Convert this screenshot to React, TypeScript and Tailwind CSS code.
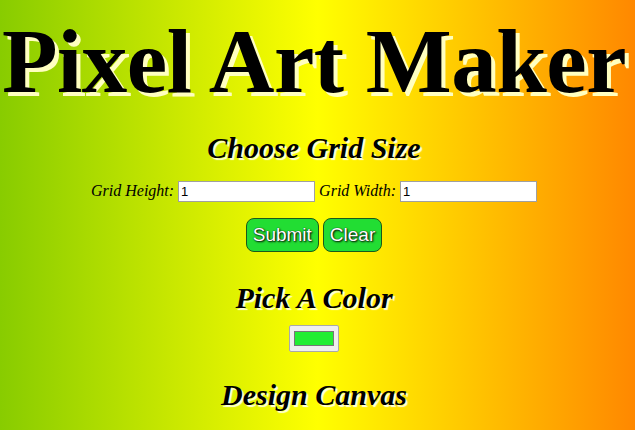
import React from 'react';

const serif = "font-['Liberation_Serif','Times_New_Roman',serif]";
const sans = "font-['Liberation_Sans',Arial,sans-serif]";

const App = () => {
  return (
    <div className={`min-h-screen w-full overflow-hidden bg-[linear-gradient(to_right,#88cc00,#ffff00,#ff8800)] ${serif} text-black`}>
      <div className="flex flex-col items-center pr-[7px]">
        {/* Title */}
        <h1 className="mt-[16px] text-[91px] font-bold leading-none tracking-[-0.5px] whitespace-nowrap [text-shadow:4px_4px_0_#ffffc0]">
          Pixel Art Maker
        </h1>

        {/* Grid size */}
        <h2 className="mt-[26px] text-[30px] font-bold italic leading-none [text-shadow:2px_2px_1px_#ffffe0]">
          Choose Grid Size
        </h2>
        <form className="mt-[16px] flex items-center gap-[4px] text-[16px] italic">
          <label htmlFor="h">Grid Height:</label>
          <input
            id="h"
            defaultValue="1"
            className={`h-[21px] w-[137px] border border-[#a0a0a0] bg-white px-[2px] not-italic text-[13px] ${sans}`}
          />
          <label htmlFor="w">Grid Width:</label>
          <input
            id="w"
            defaultValue="1"
            className={`h-[21px] w-[137px] border border-[#a0a0a0] bg-white px-[2px] not-italic text-[13px] ${sans}`}
          />
        </form>
        <div className={`mt-[15px] flex gap-[4px] ${sans}`}>
          <button className="h-[34px] rounded-[8px] border border-[#1a5a1a] bg-[#22dd33] px-[6px] text-[19px] text-white [text-shadow:1px_1px_2px_#000,0_0_1px_#000]">
            Submit
          </button>
          <button className="h-[34px] rounded-[8px] border border-[#1a5a1a] bg-[#22dd33] px-[6px] text-[19px] text-white [text-shadow:1px_1px_2px_#000,0_0_1px_#000]">
            Clear
          </button>
        </div>

        {/* Colour */}
        <h2 className="mt-[31px] text-[30px] font-bold italic leading-none [text-shadow:2px_2px_1px_#ffffe0]">
          Pick A Color
        </h2>
        <input
          type="color"
          defaultValue="#22ee33"
          className="mt-[12px] h-[27px] w-[50px] rounded-[2px] border border-[#a9a9a9] bg-[#efefef] px-[2px] py-[1px] [&::-webkit-color-swatch-wrapper]:px-[2px] [&::-webkit-color-swatch-wrapper]:py-[4px] [&::-webkit-color-swatch]:border [&::-webkit-color-swatch]:border-[#777777]"
        />

        {/* Canvas */}
        <h2 className="mt-[28px] text-[30px] font-bold italic leading-none [text-shadow:2px_2px_1px_#ffffe0]">
          Design Canvas
        </h2>
        <table className="mt-[20px]"></table>
      </div>
    </div>
  );
};

export default App;
